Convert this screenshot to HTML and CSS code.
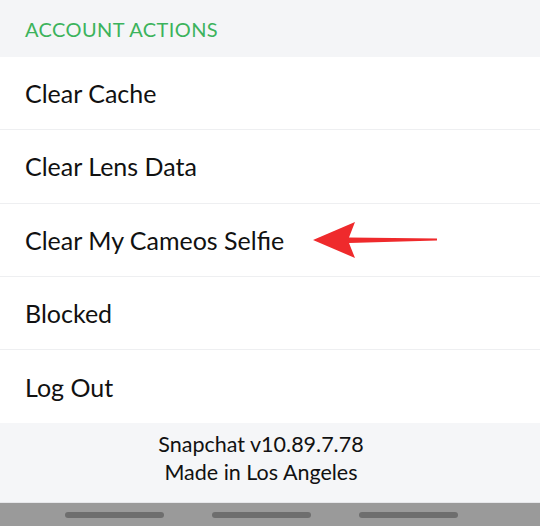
FILE: index.html
```html
<!DOCTYPE html>
<html>
<head>
<meta charset="utf-8">
<link rel="stylesheet" href="styles.css">
</head>
<body>
<div class="screen">
  <div class="section-header">ACCOUNT ACTIONS</div>
  <div class="list">
    <div class="row">Clear Cache</div>
    <div class="row">Clear Lens Data</div>
    <div class="row row-marked">Clear My Cameos Selfie
      <svg class="arrow" width="130" height="40" viewBox="0 0 130 40">
        <path d="M0 20 L42 2 L36 17.5 L124 18.5 L124 20.5 L36 23 L42 38 Z" fill="#ef2a2c"/>
      </svg>
    </div>
    <div class="row">Blocked</div>
    <div class="row last">Log Out</div>
  </div>
  <div class="footer">
    <div>Snapchat v10.89.7.78</div>
    <div>Made in Los Angeles</div>
  </div>
  <div class="navbar">
    <span class="pill"></span>
    <span class="pill"></span>
    <span class="pill"></span>
  </div>
</div>
</body>
</html>
```
FILE: styles.css
```css
* { box-sizing: border-box; }
html, body { margin: 0; padding: 0; }
body {
  width: 540px;
  height: 526px;
  overflow: hidden;
  background: #ffffff;
  font-family: "Lato", "Noto Sans", sans-serif;
  color: #111111;
}
.screen {
  display: flex;
  flex-direction: column;
  height: 526px;
}
.section-header {
  height: 57px;
  background: #f4f5f7;
  color: #3cb35c;
  font-size: 20px;
  padding-left: 25px;
  display: flex;
  align-items: center;
  letter-spacing: 0.4px;
}
.list { background: #fff; }
.row {
  height: 73.3px;
  display: flex;
  align-items: center;
  padding-left: 25px;
  font-size: 25px;
  border-bottom: 1px solid #eeeff1;
  position: relative;
}
.row.last { border-bottom: none; }
.arrow {
  position: absolute;
  left: 313px;
  top: 16px;
}
.footer {
  height: 80px;
  background: #f5f6f8;
  border-bottom: 1px solid #e6e7ea;
  display: flex;
  flex-direction: column;
  align-items: center;
  justify-content: center;
  font-size: 21.5px;
  line-height: 28px;
  padding-right: 18px;
  padding-bottom: 10px;
}
.navbar {
  flex: 1;
  background: #9a9a9a;
  display: flex;
  justify-content: center;
  align-items: center;
  gap: 48px;
  padding-right: 18px;
}
.pill {
  width: 99px;
  height: 6px;
  border-radius: 3px;
  background: #6e6e6e;
}
```
